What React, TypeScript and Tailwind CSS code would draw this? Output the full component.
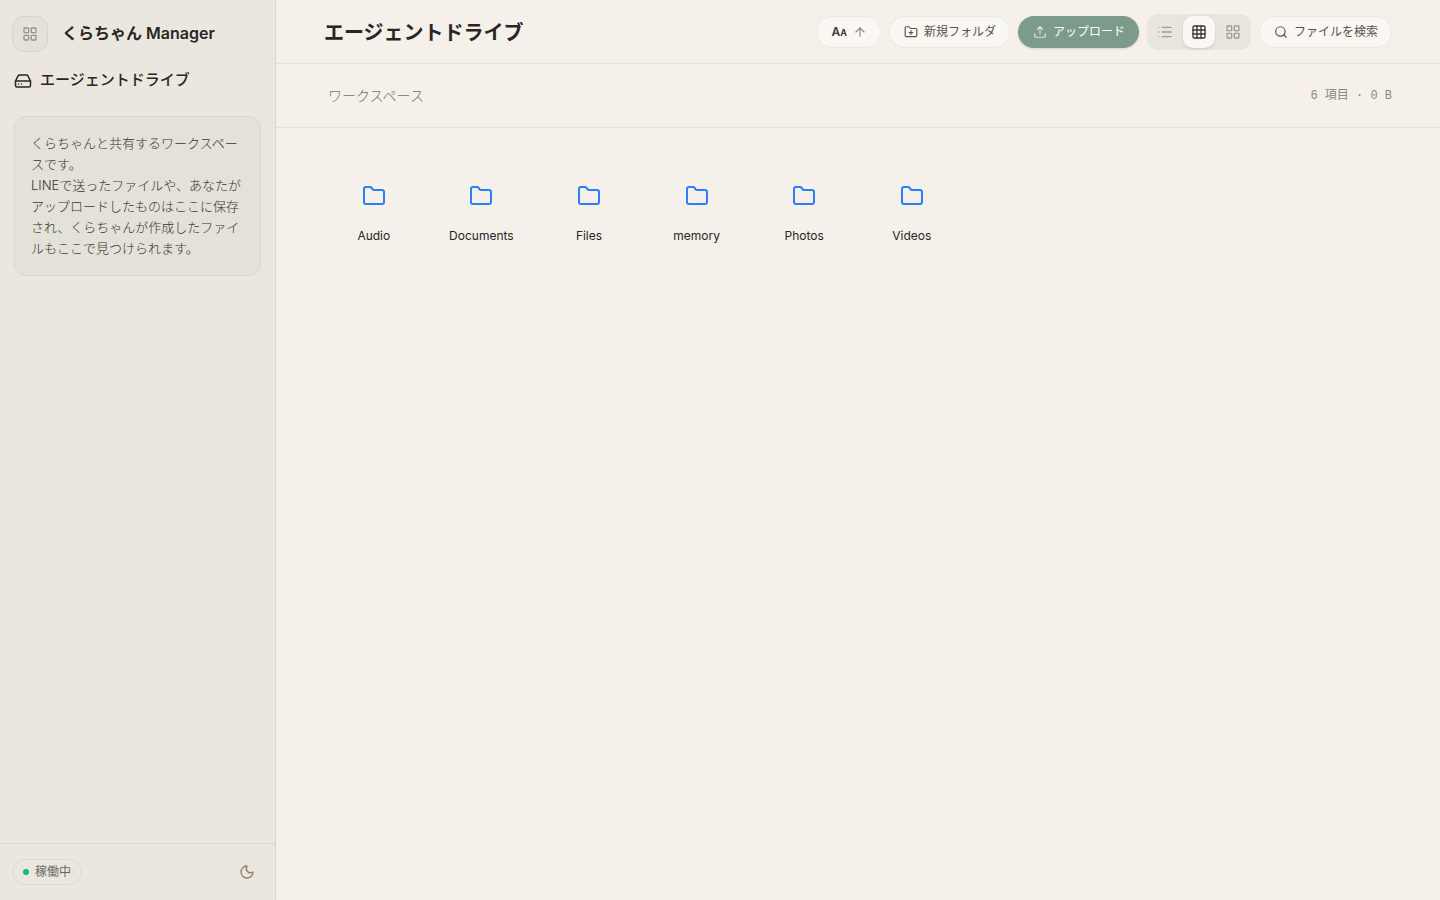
import { useState } from 'react';
import {
  ArrowUp,
  Folder,
  FolderPlus,
  Grid3x3,
  HardDrive,
  LayoutGrid,
  List,
  Moon,
  Search,
  Upload,
} from 'lucide-react';

const folders = ['Audio', 'Documents', 'Files', 'memory', 'Photos', 'Videos'];

const views = [
  { id: 'list', label: 'リスト', Icon: List },
  { id: 'small', label: '小アイコン', Icon: Grid3x3 },
  { id: 'large', label: '大アイコン', Icon: LayoutGrid },
];

const pill =
  'flex h-8 items-center gap-1.5 rounded-full bg-[#faf8f3] pr-3.5 pl-[15px] text-xs text-[#57534e] inset-ring inset-ring-[#ece8e0]';

function Sidebar() {
  return (
    <aside className="flex w-69 shrink-0 flex-col border-r border-[#dad6cf] bg-[#ebe7df]">
      <div className="flex items-center gap-3.5 px-3 pt-4">
        <button
          type="button"
          aria-label="メニュー"
          className="flex size-9 items-center justify-center rounded-xl border border-[#d8d4cb] bg-[#e5e1d8] text-[#9c9484]"
        >
          <LayoutGrid size={16} />
        </button>
        <div className="pb-0.5 text-base font-semibold text-[#292524]">くらちゃん Manager</div>
      </div>
      <h2 className="flex h-14 items-center gap-2 px-3.5 text-[15px] font-medium text-[#292524]">
        <HardDrive size={18} className="mt-0.5" />
        エージェントドライブ
      </h2>
      <p className="mx-3.5 mt-2 rounded-xl border border-[#d5d8cb] bg-[#e3e1d8] p-4 text-[13px] leading-[21px] font-light text-[#3a3632]">
        くらちゃんと共有するワークスペースです。
        <br />
        LINEで送ったファイルや、あなたがアップロードしたものはここに保存され、くらちゃんが作成したファイルもここで見つけられます。
      </p>
      <div className="mt-auto flex h-[57px] items-center justify-between border-t border-[#dad6cf] px-3">
        <div className="flex h-[26px] items-center gap-1.5 rounded-full border border-[#dfdad1] px-2.5 text-xs text-[#6b665f]">
          <span className="size-1.5 rounded-full bg-[#10b981]" />
          稼働中
        </div>
        <button
          type="button"
          aria-label="ダークモード"
          className="flex size-8 items-center justify-center text-[#8a8272]"
        >
          <Moon size={16} />
        </button>
      </div>
    </aside>
  );
}

export default function App() {
  const [view, setView] = useState('small');

  return (
    <div className="flex min-h-screen bg-[#f5f0ea] font-['Inter','Noto_Sans_CJK_JP',sans-serif]">
      <Sidebar />
      <main className="flex min-w-0 flex-1 flex-col">
        <header className="flex h-16 items-center justify-between border-b border-[#e7e3dc] px-12">
          <h1 className="pt-0.5 text-xl font-bold text-[#292524]">エージェントドライブ</h1>
          <div className="flex items-center gap-2">
            <button type="button" className={pill}>
              <span className="font-semibold text-[#3a3632]">
                A<span className="text-[9px] font-bold">A</span>
              </span>
              <ArrowUp size={14} className="text-[#8a857d]" />
            </button>
            <button type="button" className={pill}>
              <FolderPlus size={14} />
              新規フォルダ
            </button>
            <button
              type="button"
              className="flex h-8 items-center gap-1.5 rounded-full bg-[#7d9b8a] pr-3.5 pl-[15px] text-xs text-white shadow-sm"
            >
              <Upload size={14} className="text-[#dfe8e2]" />
              アップロード
            </button>
            <div className="flex gap-0.5 rounded-xl bg-[#e8e5de] p-0.5">
              {views.map(({ id, label, Icon }) => (
                <button
                  key={id}
                  type="button"
                  aria-label={label}
                  aria-pressed={view === id}
                  onClick={() => setView(id)}
                  className={
                    view === id
                      ? 'flex size-8 items-center justify-center rounded-[10px] bg-[#faf8f3] text-[#3a3632] shadow-sm'
                      : 'flex size-8 items-center justify-center rounded-[10px] text-[#a39b8f]'
                  }
                >
                  <Icon size={16} />
                </button>
              ))}
            </div>
            <button type="button" className={pill}>
              <Search size={14} />
              ファイルを検索
            </button>
          </div>
        </header>
        <div className="flex h-16 items-center justify-between border-b border-[#e7e3dc] pr-12 pl-13">
          <a href="#workspace" className="text-sm font-light text-[#756e64]">
            ワークスペース
          </a>
          <span className="font-['Liberation_Mono','Noto_Sans_CJK_JP',monospace] text-xs text-[#8f887e]">
            6 項目 · 0 B
          </span>
        </div>
        <div className="grid grid-cols-[repeat(auto-fill,minmax(96px,1fr))] gap-2 px-12 pt-10">
          {folders.map((name) => (
            <button key={name} type="button" className="flex flex-col items-center gap-5 py-4">
              <Folder size={24} className="text-[#2b7fff]" />
              <span className="text-xs text-[#292524]">{name}</span>
            </button>
          ))}
        </div>
      </main>
    </div>
  );
}
